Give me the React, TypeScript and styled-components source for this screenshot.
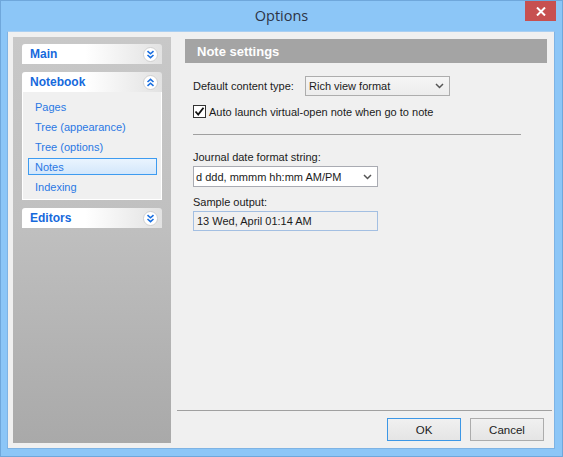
import styled, { createGlobalStyle } from "styled-components";

const GlobalStyle = createGlobalStyle`
  html, body {
    margin: 0;
    padding: 0;
    background: #8cc6f7;
  }
  body {
    font-family: "Liberation Sans", Arial, sans-serif;
    font-size: 11px;
    color: #1b1b1b;
  }
`;

const Window = styled.div`
  width: 563px;
  height: 457px;
  box-sizing: border-box;
  background: #8cc6f7;
  border: 1px solid #6fa7db;
  display: flex;
  flex-direction: column;
`;

const TitleBar = styled.div`
  height: 30px;
  position: relative;
  display: flex;
  align-items: center;
  justify-content: center;
`;

const Title = styled.div`
  font-family: "Open Sans", "Noto Sans", sans-serif;
  font-size: 14.5px;
  color: #2d3446;
  margin-top: -1px;
`;

const CloseButton = styled.div`
  position: absolute;
  top: 0;
  right: 6px;
  width: 31px;
  height: 20px;
  background: #c75050;
  display: flex;
  align-items: center;
  justify-content: center;
`;

const Client = styled.div`
  flex: 1;
  margin: 0 7px 7px 6px;
  background: #f0f0f0;
  border: 1px solid #7eb3e4;
  border-top-color: #a9cff2;
  display: flex;
  padding: 5px 2px 5px 5px;
`;

const Sidebar = styled.div`
  width: 158px;
  flex: none;
  background: linear-gradient(to bottom, #c8c8c8 0%, #c0c0c0 45%, #a9a9a9 100%);
  padding: 7px 9px;
  box-sizing: border-box;
  display: flex;
  flex-direction: column;
  gap: 8px;
`;

const Section = styled.div`
  display: flex;
  flex-direction: column;
`;

const SectionHeader = styled.div`
  height: 20px;
  border-radius: 3px 3px 0 0;
  background: linear-gradient(to right, #ffffff 0%, #ffffff 45%, #e2e2e2 100%);
  display: flex;
  align-items: center;
  justify-content: space-between;
  padding: 0 4px 0 8px;
  font-weight: bold;
  font-size: 12px;
  color: #1669dc;
`;

const Items = styled.div`
  background: #f0f0f0;
  border: 1px solid #ffffff;
  border-top: none;
  padding: 5px 4px 2px 5px;
  display: flex;
  flex-direction: column;
`;

const Item = styled.div<{ $active?: boolean }>`
  height: 20px;
  box-sizing: border-box;
  display: flex;
  align-items: center;
  padding-left: 7px;
  color: #2a78e4;
  ${(p) =>
    p.$active &&
    `
    margin: 1px 0 2px;
    height: 17px;
    border: 1px solid #3d9bf0;
    padding-left: 6px;
    background: linear-gradient(to bottom, #eaf4fe, #d3e7fb);
  `}
`;

const MainColumn = styled.div`
  flex: 1;
  margin-left: 6px;
  display: flex;
  flex-direction: column;
`;

const Settings = styled.div`
  flex: 1;
  padding: 2px 5px 0 8px;
`;

const PanelHeader = styled.div`
  height: 24px;
  background: #a4a4a4;
  color: #ffffff;
  font-weight: bold;
  font-size: 13px;
  display: flex;
  align-items: center;
  padding-left: 12px;
`;

const Content = styled.div`
  padding: 13px 0 0 8px;
  display: flex;
  flex-direction: column;
`;

const Row = styled.div`
  display: flex;
  align-items: center;
`;

const InlineLabel = styled.span`
  width: 112px;
`;

const Select = styled.div<{ $width: number; $editable?: boolean }>`
  width: ${(p) => p.$width}px;
  height: ${(p) => (p.$editable ? "21px" : "20px")};
  box-sizing: border-box;
  border: 1px solid ${(p) => (p.$editable ? "#a9abb2" : "#adadad")};
  background: ${(p) => (p.$editable ? "#ffffff" : "linear-gradient(#f5f5f5, #ececec)")};
  display: flex;
  align-items: center;
  justify-content: space-between;
  padding: 0 5px 0 ${(p) => (p.$editable ? "2px" : "3px")};
  font-size: 11px;
`;

const CheckRow = styled.label`
  display: flex;
  align-items: center;
  gap: 3px;
  margin-top: 9px;
  font-size: 11px;
`;

const Box = styled.span`
  width: 13px;
  height: 13px;
  box-sizing: border-box;
  border: 1px solid #333333;
  background: #ffffff;
  display: flex;
  align-items: center;
  justify-content: center;
`;

const Divider = styled.div`
  width: 328px;
  height: 1px;
  background: #a0a0a0;
  margin-top: 16px;
`;

const FieldLabel = styled.div<{ $gap: number }>`
  font-size: 11px;
  margin-top: ${(p) => p.$gap}px;
  margin-bottom: 3px;
`;

const ReadOnly = styled.div`
  width: 185px;
  height: 20px;
  box-sizing: border-box;
  border: 1px solid #a3bfe2;
  background: #f0f0f0;
  display: flex;
  align-items: center;
  padding-left: 3px;
  font-size: 11px;
`;

const Footer = styled.div`
  border-top: 1px solid #a0a0a0;
  padding: 7px 8px 2px 0;
  display: flex;
  justify-content: flex-end;
  gap: 9px;
`;

const Button = styled.div<{ $default?: boolean }>`
  width: 74px;
  height: 23px;
  box-sizing: border-box;
  border: 1px solid ${(p) => (p.$default ? "#3c97e6" : "#acacac")};
  background: linear-gradient(#f0f0f0, #e5e5e5);
  display: flex;
  align-items: center;
  justify-content: center;
  font-size: 11.5px;
`;

const Chevrons = ({ up }: { up?: boolean }) => (
  <svg width="15" height="15" viewBox="0 0 15 15">
    <circle cx="7.5" cy="7.5" r="7" fill="#ffffff" stroke="#cfcfcf" />
    <g
      fill="none"
      stroke="#1a6fe0"
      strokeWidth="1.6"
      transform={up ? "rotate(180 7.5 7.5)" : undefined}
    >
      <path d="M4.5 4.2 L7.5 6.8 L10.5 4.2" />
      <path d="M4.5 8 L7.5 10.6 L10.5 8" />
    </g>
  </svg>
);

const Arrow = () => (
  <svg width="9" height="6" viewBox="0 0 9 6">
    <path d="M1 1 L4.5 4.5 L8 1" fill="none" stroke="#555" strokeWidth="1.5" />
  </svg>
);

const nbItems = ["Pages", "Tree (appearance)", "Tree (options)", "Notes", "Indexing"];

export default function App() {
  return (
    <>
      <GlobalStyle />
      <Window>
        <TitleBar>
          <Title>Options</Title>
          <CloseButton>
            <svg width="10" height="9" viewBox="0 0 10 9">
              <path d="M1 0.5 L9 8.5 M9 0.5 L1 8.5" stroke="#fff" strokeWidth="2" />
            </svg>
          </CloseButton>
        </TitleBar>
        <Client>
          <Sidebar>
            <Section>
              <SectionHeader>
                Main
                <Chevrons />
              </SectionHeader>
            </Section>
            <Section>
              <SectionHeader>
                Notebook
                <Chevrons up />
              </SectionHeader>
              <Items>
                {nbItems.map((it) => (
                  <Item key={it} $active={it === "Notes"}>
                    {it}
                  </Item>
                ))}
              </Items>
            </Section>
            <Section>
              <SectionHeader>
                Editors
                <Chevrons />
              </SectionHeader>
            </Section>
          </Sidebar>
          <MainColumn>
            <Settings>
              <PanelHeader>Note settings</PanelHeader>
              <Content>
                <Row>
                  <InlineLabel>Default content type:</InlineLabel>
                  <Select $width={145}>
                    Rich view format
                    <Arrow />
                  </Select>
                </Row>
                <CheckRow>
                  <Box>
                    <svg width="11" height="11" viewBox="0 0 11 11">
                      <path d="M1.5 5.5 L4.2 8.5 L9.5 1.8" fill="none" stroke="#111" strokeWidth="1.8" />
                    </svg>
                  </Box>
                  Auto launch virtual-open note when go to note
                </CheckRow>
                <Divider />
                <FieldLabel $gap={16}>Journal date format string:</FieldLabel>
                <Select $width={185} $editable>
                  d ddd, mmmm hh:mm AM/PM
                  <Arrow />
                </Select>
                <FieldLabel $gap={9}>Sample output:</FieldLabel>
                <ReadOnly>13 Wed, April 01:14 AM</ReadOnly>
              </Content>
            </Settings>
            <Footer>
              <Button $default>OK</Button>
              <Button>Cancel</Button>
            </Footer>
          </MainColumn>
        </Client>
      </Window>
    </>
  );
}
